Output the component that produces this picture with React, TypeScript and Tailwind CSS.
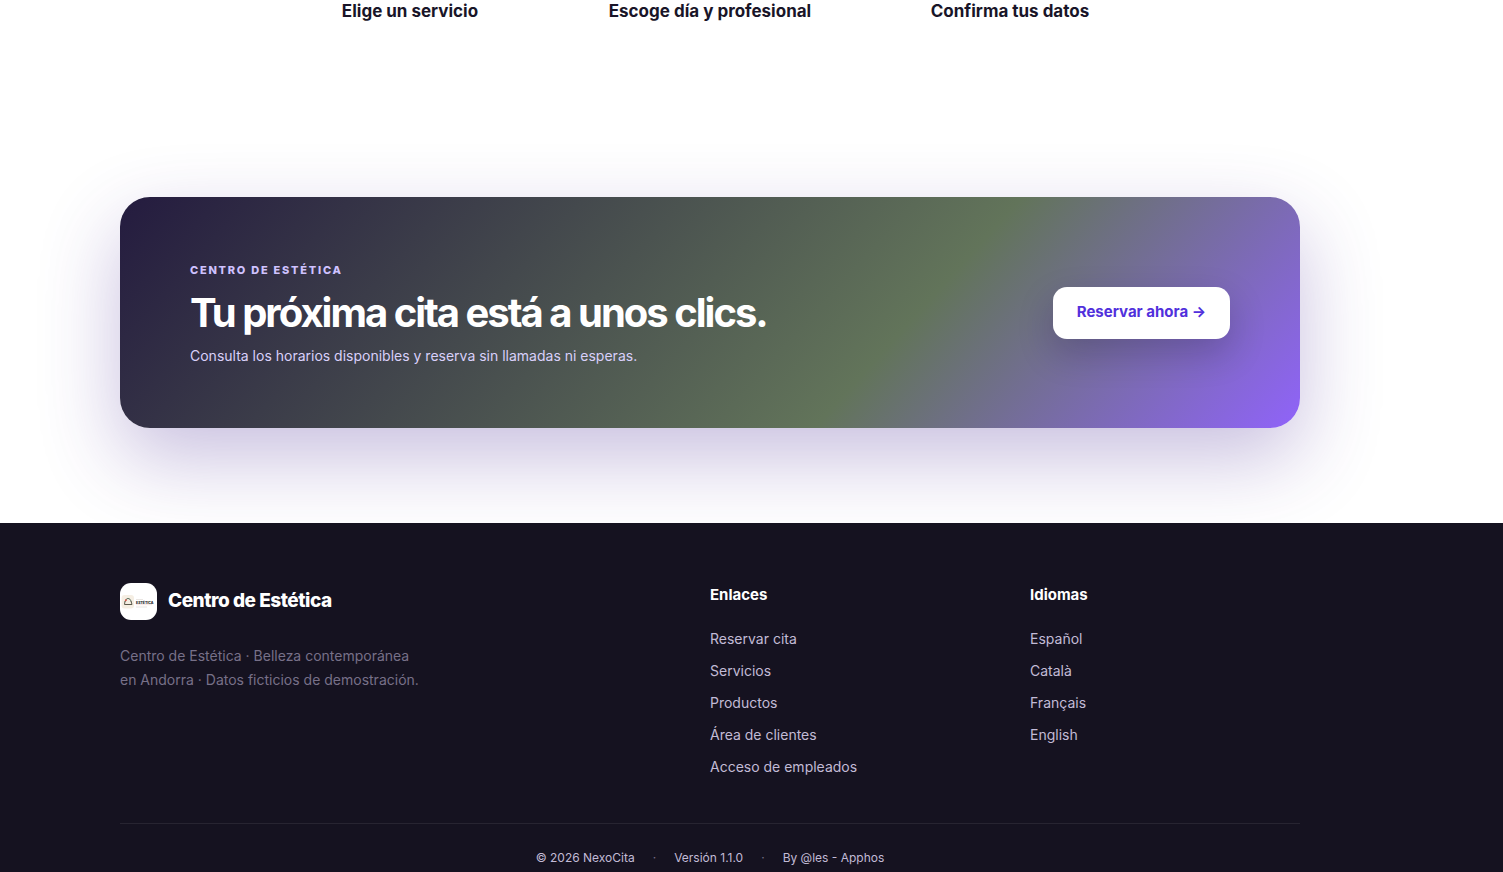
interface FooterLink {
  label: string
  href: string
}

interface FooterColumnProps {
  title: string
  links: FooterLink[]
}

const steps = ['Elige un servicio', 'Escoge día y profesional', 'Confirma tus datos']

const siteLinks: FooterLink[] = [
  { label: 'Reservar cita', href: '#reservar' },
  { label: 'Servicios', href: '#servicios' },
  { label: 'Productos', href: '#productos' },
  { label: 'Área de clientes', href: '#clientes' },
  { label: 'Acceso de empleados', href: '#empleados' },
]

const languages: FooterLink[] = [
  { label: 'Español', href: '#es' },
  { label: 'Català', href: '#ca' },
  { label: 'Français', href: '#fr' },
  { label: 'English', href: '#en' },
]

function Steps() {
  return (
    <section className="mx-auto grid max-w-[900px] grid-cols-3 text-center">
      {steps.map((step) => (
        <h3 key={step} className="text-[17px] leading-[22px] font-bold text-[#191528]">
          {step}
        </h3>
      ))}
    </section>
  )
}

function CallToAction() {
  return (
    <section className="mt-[175px] flex items-center justify-between gap-8 rounded-[30px] bg-[linear-gradient(132deg,#241b3f_0%,#62745a_65%,#9063fa_100%)] px-[70px] py-[60px] shadow-[0_30px_80px_rgba(72,42,150,0.3)]">
      <div>
        <p className="text-[11px] leading-[26px] font-extrabold tracking-[0.16em] text-[#cfc2ff] uppercase">
          Centro de Estética
        </p>
        <h2 className="mt-[5px] text-[40px] leading-[50px] font-bold tracking-tighter text-white">
          Tu próxima cita está a unos clics.
        </h2>
        <p className="mt-1.5 text-[14px] leading-6 text-[#d9d0fa]">
          Consulta los horarios disponibles y reserva sin llamadas ni esperas.
        </p>
      </div>
      <a
        href="#reservar"
        className="flex h-[52px] shrink-0 items-center rounded-[14px] bg-white px-6 text-[15px] font-bold text-[#5130dc] shadow-[0_14px_35px_rgba(20,10,50,0.22)]"
      >
        Reservar ahora →
      </a>
    </section>
  )
}

function BrandMark() {
  return (
    <svg viewBox="0 0 37 37" className="size-[37px] rounded-[11px] bg-white" aria-hidden="true">
      <rect x="1.500" y="12" width="12.500" height="13.500" rx="3" fill="#f5eee3" />
      <path d="M5.500 18.500c0-4 5-4 5.500 0" fill="none" stroke="#4f6653" strokeWidth="1" />
      <path d="M5 18l-.5 3.500h7.500l-1-3.500" fill="none" stroke="#5c5a4c" strokeWidth="1" />
      <circle cx="5.800" cy="17.300" r="1" fill="#d9574a" />
      <text x="16" y="20.500" fontSize="3.500" fontWeight="800" fill="#222222" fontFamily="Inter, sans-serif">
        ESTÉTICA
      </text>
      <path d="M16 16.500h7M16 24h11" stroke="#e4dfdc" strokeWidth="0.800" />
      <path d="M16 21.700h16" stroke="#f0c9c5" strokeWidth="0.500" />
    </svg>
  )
}

function FooterColumn({ title, links }: FooterColumnProps) {
  return (
    <nav aria-label={title}>
      <h4 className="text-[15px] leading-6 font-bold text-white">{title}</h4>
      <ul className="mt-5 flex flex-col gap-2 text-[14px] leading-6">
        {links.map((link) => (
          <li key={link.label}>
            <a href={link.href} className="text-[#c2bbd6]">
              {link.label}
            </a>
          </li>
        ))}
      </ul>
    </nav>
  )
}

function Footer() {
  return (
    <footer className="mt-[95px] bg-[#151220] pr-[83px]">
      <div className="mx-auto max-w-[1180px]">
        <div className="grid grid-cols-[2fr_1fr_1fr] gap-[50px] pt-[60px] pb-11">
          <div>
            <div className="flex items-center gap-[11px]">
              <BrandMark />
              <strong className="text-[19px] font-extrabold tracking-tight text-white">Centro de Estética</strong>
            </div>
            <p className="mt-6 max-w-[305px] text-[14px] leading-6 text-[#777088]">
              Centro de Estética · Belleza contemporánea en Andorra · Datos ficticios de demostración.
            </p>
          </div>
          <FooterColumn title="Enlaces" links={siteLinks} />
          <FooterColumn title="Idiomas" links={languages} />
        </div>
        <div className="flex items-center justify-center gap-[18px] border-t border-white/8 pt-6 pb-1 text-xs leading-5 text-[#c2bbd6]">
          <span>© 2026 NexoCita</span>
          <span className="text-[#777088]">·</span>
          <span>Versión 1.1.0</span>
          <span className="text-[#777088]">·</span>
          <span>By @les - Apphos</span>
        </div>
      </div>
    </footer>
  )
}

export default function App() {
  return (
    <div className="min-h-screen overflow-x-hidden bg-white font-[Inter,sans-serif]">
      <main className="pr-[83px]">
        <div className="mx-auto max-w-[1180px]">
          <Steps />
          <CallToAction />
        </div>
      </main>
      <Footer />
    </div>
  )
}
